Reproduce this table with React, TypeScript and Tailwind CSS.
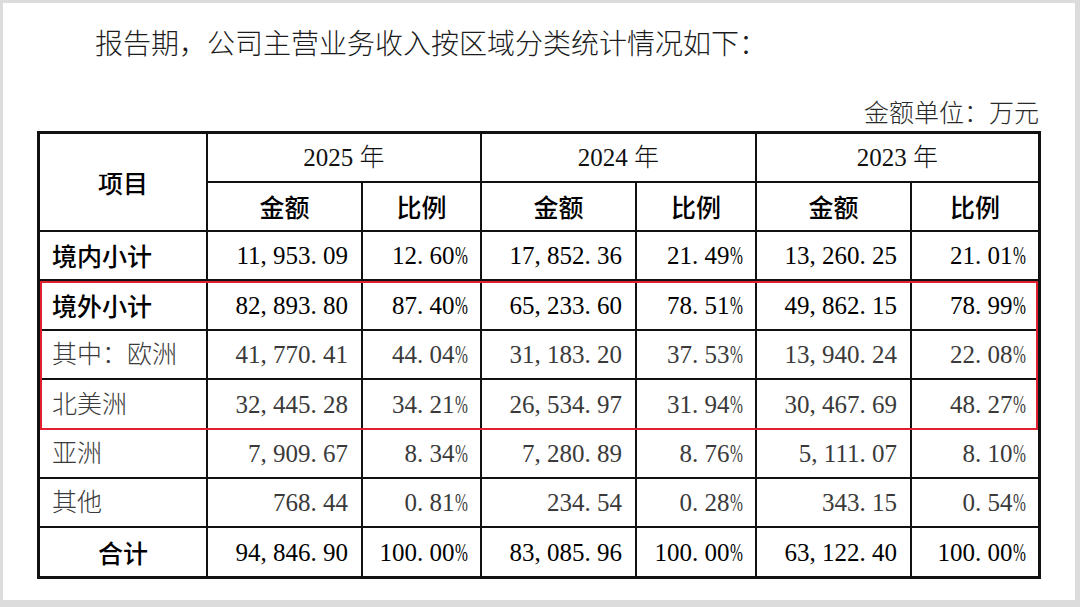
import React from "react";

const SONG = "font-['Liberation_Serif','Noto_Sans_CJK_SC',serif] font-light";
const HEI = "font-['Noto_Sans_CJK_SC',sans-serif] font-medium";

const ROWS = [
  { label: "境内小计", bold: true, vals: ["11,953.09", "12.60%", "17,852.36", "21.49%", "13,260.25", "21.01%"] },
  { label: "境外小计", bold: true, vals: ["82,893.80", "87.40%", "65,233.60", "78.51%", "49,862.15", "78.99%"] },
  { label: "其中：欧洲", vals: ["41,770.41", "44.04%", "31,183.20", "37.53%", "13,940.24", "22.08%"] },
  { label: "北美洲", vals: ["32,445.28", "34.21%", "26,534.97", "31.94%", "30,467.69", "48.27%"] },
  { label: "亚洲", vals: ["7,909.67", "8.34%", "7,280.89", "8.76%", "5,111.07", "8.10%"] },
  { label: "其他", vals: ["768.44", "0.81%", "234.54", "0.28%", "343.15", "0.54%"] },
  { label: "合计", bold: true, center: true, vals: ["94,846.90", "100.00%", "83,085.96", "100.00%", "63,122.40", "100.00%"] },
];

// SimSun-like figures: punctuation and % take half an em each
const Num = ({ v }: { v: string }) => (
  <span>
    {v.split("").map((c, i) => {
      if (c === "," || c === ".")
        return (
          <span key={i} className="inline-block w-[0.5em]">
            {c}
          </span>
        );
      if (c === "%")
        return (
          <span key={i} className="inline-block w-[0.5em]">
            <span className="inline-block origin-left scale-x-[0.62]">%</span>
          </span>
        );
      return <span key={i}>{c}</span>;
    })}
  </span>
);

const Cell = ({ children, className = "" }: { children: React.ReactNode; className?: string }) => (
  <div className={`flex items-center bg-white text-[25px] leading-none ${className}`}>{children}</div>
);

export default function App() {
  return (
    <div className="w-[1080px] h-[607px] overflow-hidden bg-white border-l-[3px] border-t-[3px] border-r-[5px] border-b-[7px] border-[#dcdcdc] box-border">
      {/* ── Intro sentence ── */}
      <div className={`mt-[28px] pl-[92px] text-[28px] leading-[28px] text-[#1c1c1c] ${SONG}`}>
        报告期，公司主营业务收入按区域分类统计情况如下：
      </div>

      {/* ── Unit note ── */}
      <div className={`mt-[42px] pr-[36px] text-right text-[25px] leading-[25px] text-[#2a2a2a] ${SONG}`}>
        金额单位：万元
      </div>

      {/* ── Table ── */}
      <div className="relative mt-[5px] ml-[34px] w-fit">
        <div className="grid grid-cols-[166px_153px_117px_153px_118px_153px_126px] grid-rows-[47px_47px_47px_48px_47px_48px_47px_47px_48px] gap-[2px] bg-[#111] p-[3px]">
          <Cell className={`row-span-2 justify-center text-black ${HEI}`}>项目</Cell>
          {["2025", "2024", "2023"].map((y) => (
            <Cell key={y} className={`col-span-2 justify-center text-[#111] ${SONG}`}>
              {y} 年
            </Cell>
          ))}
          {[0, 1, 2].map((i) => (
            <React.Fragment key={i}>
              <Cell className={`justify-center text-black ${HEI}`}>金额</Cell>
              <Cell className={`justify-center text-black ${HEI}`}>比例</Cell>
            </React.Fragment>
          ))}

          {ROWS.map((r) => (
            <React.Fragment key={r.label}>
              <Cell
                className={`${r.center ? "justify-center" : "pl-[12px]"} ${
                  r.bold ? `text-black ${HEI}` : `text-[#3a3a3a] ${SONG}`
                }`}
              >
                {r.label}
              </Cell>
              {r.vals.map((v, i) => (
                <Cell
                  key={i}
                  className={`justify-end pr-[13px] font-['Liberation_Serif',serif] ${
                    r.bold ? "text-black" : "text-[#3a3a3a]"
                  }`}
                >
                  <Num v={v} />
                </Cell>
              ))}
            </React.Fragment>
          ))}
        </div>

        {/* red highlight over the overseas rows */}
        <div className="absolute left-[3px] right-[3px] top-[150px] h-[149px] border-2 border-[#e0202e] pointer-events-none" />
      </div>
    </div>
  );
}
